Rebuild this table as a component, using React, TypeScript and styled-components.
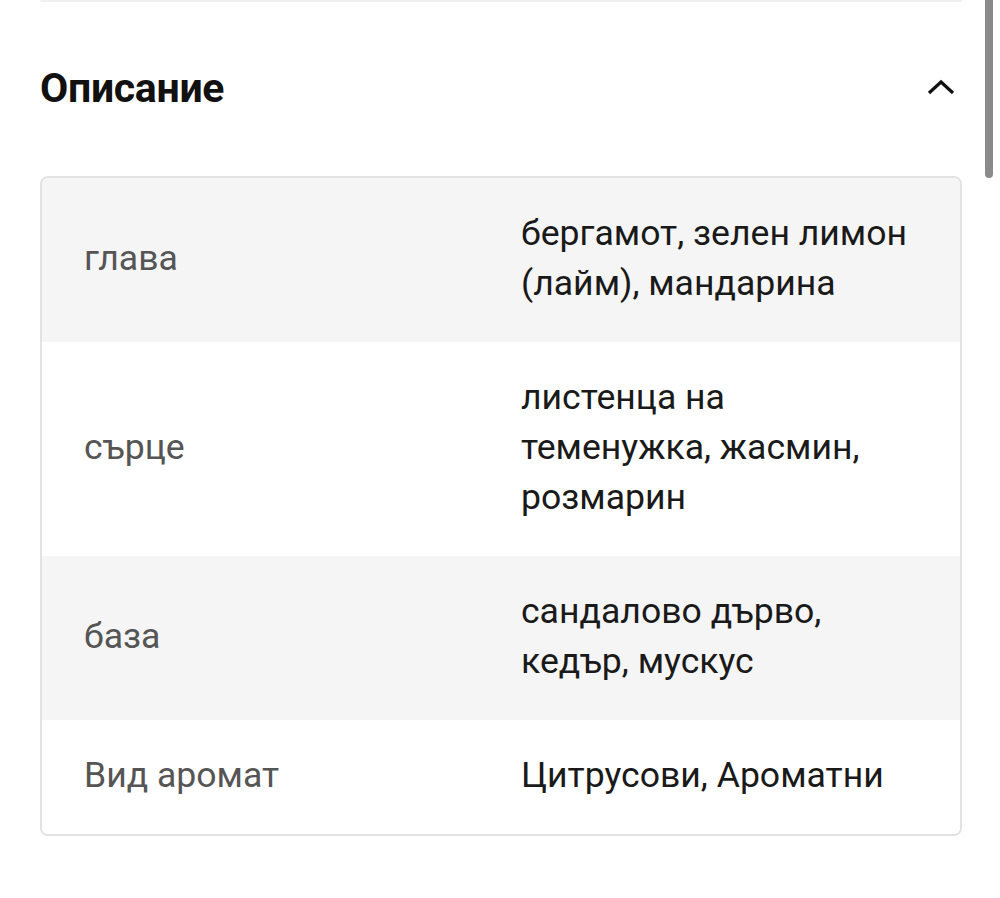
import React from "react";
import styled, { createGlobalStyle } from "styled-components";

const Global = createGlobalStyle`
  html, body { margin: 0; padding: 0; background: #fff; }
  body { font-family: Roboto, "Noto Sans", sans-serif; overflow: hidden; }
`;

const Page = styled.div`
  position: relative;
  width: 1000px;
  height: 898px;
  background: #fff;
`;

const Content = styled.div`
  padding: 0 38px 0 40px;
`;

const PrevEdge = styled.div`
  height: 0;
  border-bottom: 2px solid #f0f0f0;
  border-radius: 0 0 6px 6px;
`;

const Header = styled.div`
  height: 174px;
  display: flex;
  align-items: center;
  justify-content: space-between;
`;

const Title = styled.h2`
  margin: 0;
  margin-top: -3px;
  font-size: 41px;
  font-weight: 700;
  color: #111;
  letter-spacing: -0.3px;
`;

const Chevron = styled.svg`
  width: 30px;
  height: 18px;
  margin-right: 6px;
  margin-top: -4px;
`;

const Card = styled.div`
  border: 2px solid #e2e2e2;
  border-radius: 8px;
  overflow: hidden;
`;

const Row = styled.div<{ $shaded: boolean }>`
  display: grid;
  grid-template-columns: 437px 395px;
  align-items: center;
  padding: 30px 40px 34px 42px;
  background: ${(p) => (p.$shaded ? "#f5f5f5" : "#fff")};
  font-size: 35.6px;
  line-height: 50px;
`;

const Label = styled.div`
  color: #555;
`;

const Value = styled.div`
  color: #1a1a1a;
`;

const Scrollbar = styled.div`
  position: absolute;
  top: -8px;
  right: 7px;
  width: 8px;
  height: 186px;
  border-radius: 4px;
  background: #8a8a8a;
`;

const rows = [
  { label: "глава", value: "бергамот, зелен лимон (лайм), мандарина" },
  { label: "сърце", value: "листенца на теменужка, жасмин, розмарин" },
  { label: "база", value: "сандалово дърво, кедър, мускус" },
  { label: "Вид аромат", value: "Цитрусови, Ароматни" },
];

export default function App() {
  return (
    <Page>
      <Global />
      <Content>
        <PrevEdge />
        <Header>
          <Title>Описание</Title>
          <Chevron viewBox="0 0 30 18">
            <polyline
              points="3,15 15,4 27,15"
              fill="none"
              stroke="#111"
              strokeWidth="3.2"
            />
          </Chevron>
        </Header>
        <Card>
          {rows.map((r, i) => (
            <Row key={r.label} $shaded={i % 2 === 0}>
              <Label>{r.label}</Label>
              <Value>{r.value}</Value>
            </Row>
          ))}
        </Card>
      </Content>
      <Scrollbar />
    </Page>
  );
}
